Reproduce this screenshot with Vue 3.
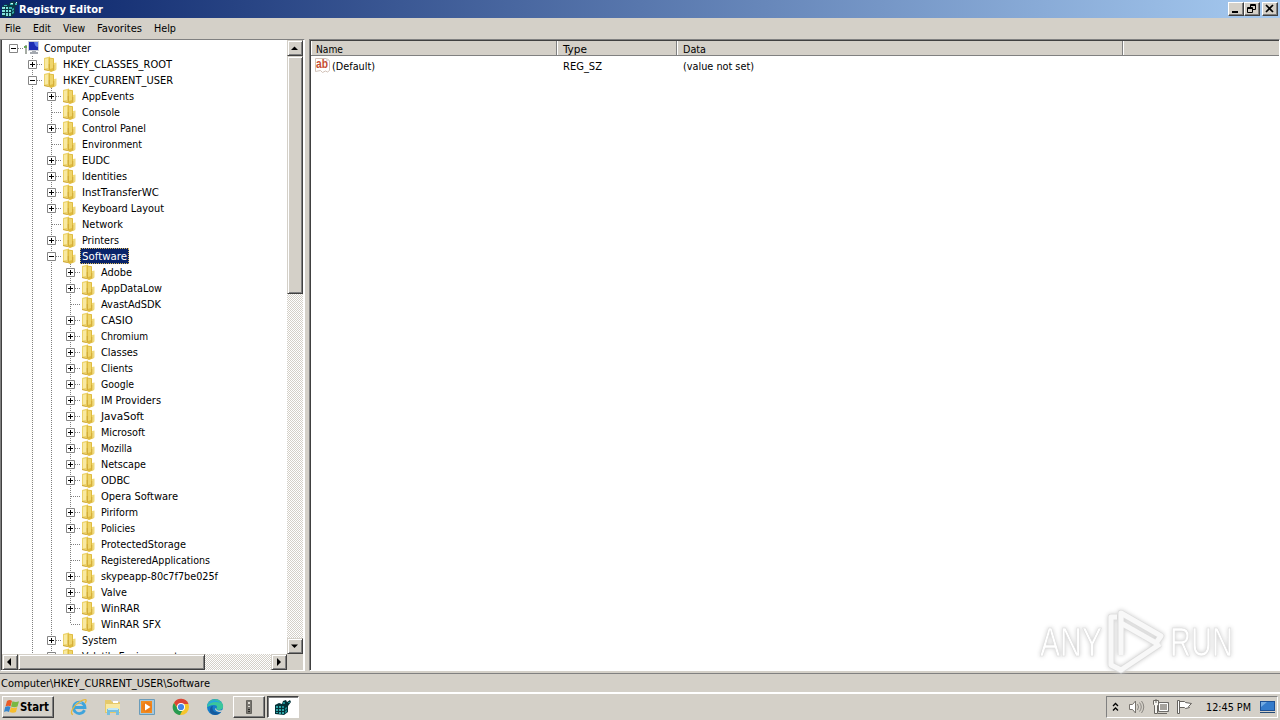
<script setup>
import { h } from 'vue'

const T = (p) =>
  h('svg', { class: 'label', width: p.w, height: 16, style: { overflow: 'visible', display: 'block', flex: 'none' } }, [
    h('text', { x: 0, y: 12, textLength: p.w, lengthAdjust: 'spacingAndGlyphs', fill: 'currentColor' }, p.t)
  ])
T.props = ['t', 'w']

const names = [
  [0, 'Computer', 47, '-'],
  [1, 'HKEY_CLASSES_ROOT', 109, '+'],
  [1, 'HKEY_CURRENT_USER', 110, '-'],
  [2, 'AppEvents', 52, '+'],
  [2, 'Console', 38, ''],
  [2, 'Control Panel', 64, '+'],
  [2, 'Environment', 60, ''],
  [2, 'EUDC', 28, '+'],
  [2, 'Identities', 45, '+'],
  [2, 'InstTransferWC', 77, '+'],
  [2, 'Keyboard Layout', 82, '+'],
  [2, 'Network', 41, ''],
  [2, 'Printers', 37, '+'],
  [2, 'Software', 45, '-'],
  [3, 'Adobe', 31, '+'],
  [3, 'AppDataLow', 61, '+'],
  [3, 'AvastAdSDK', 60, ''],
  [3, 'CASIO', 32, '+'],
  [3, 'Chromium', 47, '+'],
  [3, 'Classes', 37, '+'],
  [3, 'Clients', 32, '+'],
  [3, 'Google', 33, '+'],
  [3, 'IM Providers', 60, '+'],
  [3, 'JavaSoft', 43, '+'],
  [3, 'Microsoft', 44, '+'],
  [3, 'Mozilla', 31, '+'],
  [3, 'Netscape', 45, '+'],
  [3, 'ODBC', 29, '+'],
  [3, 'Opera Software', 77, ''],
  [3, 'Piriform', 37, '+'],
  [3, 'Policies', 34, '+'],
  [3, 'ProtectedStorage', 85, ''],
  [3, 'RegisteredApplications', 109, ''],
  [3, 'skypeapp-80c7f7be025f', 117, '+'],
  [3, 'Valve', 26, '+'],
  [3, 'WinRAR', 39, '+'],
  [3, 'WinRAR SFX', 60, ''],
  [2, 'System', 35, '+'],
  [2, 'Volatile Environment', 96, '+']
]
const rows = names.map(([level, name, w, box]) => ({
  level, name, w, box,
  last: name === 'WinRAR SFX',
  selected: name === 'Software'
}))
const menus = [['File', 16], ['Edit', 18], ['View', 22], ['Favorites', 45], ['Help', 22]]
</script>

<template>
  <div class="screen">
    <header class="title">
      <svg class="regicon" width="16" height="16" viewBox="0 0 16 16">
        <path fill="#0a3a46" d="M0 5l4-2 3 1 1-3 4-1 1 2 2-2 1 3-3 3v6l-4 5-9-1z"/>
        <path fill="#7fe0da" d="M0 6h3v2H0zM4 6h2v2H4zM0 9h3v2H0zM4 9h2v2H4zM7 9h2v2H7zM0 12h3v2H0zM4 12h2v3H4zM7 12h2v3H7z"/>
        <path fill="#36b0b0" d="M10 8l2-1v2l-2 1zM10 11l2-1v2l-2 1zM2 4h3v1H2zM8 2h3v2H8zM13 2h2v2h-2zM7 6h3v2H7z"/>
        <path fill="#d8f6f4" d="M9 2h2v1H9zM14 1h1v1h-1zM2 6h1v1H2z"/>
      </svg>
      <b><T t="Registry Editor" :w="84" /></b>
      <div class="winbtns">
        <i><svg width="14" height="12"><path d="M3 8h6v2H3z"/></svg></i>
        <i><svg width="14" height="12"><path fill="none" stroke="#000" d="M5.500 4V1.500h5v5H8M2.500 4.500h5v5h-5zM5 2.500h6M2 5.500h6"/></svg></i>
        <i class="close"><svg width="14" height="12"><path stroke="#000" stroke-width="1.700" d="M3 2l7 7M10 2L3 9"/></svg></i>
      </div>
    </header>
    <nav class="menu"><T v-for="m in menus" :key="m[0]" :t="m[0]" :w="m[1]" /></nav>

    <main class="panes">
      <section class="tree">
        <div class="treetop">
          <div class="rows">
            <div v-for="r in rows" :key="r.name" class="row">
              <span v-for="k in r.level" :key="k" class="cell"><svg v-if="k > 1" width="19" height="16"><path class="dots" d="M9.500 0V16"/></svg></span>
              <span class="cell"><svg width="19" height="16">
                <path v-if="r.level" class="dots" :d="r.last ? 'M9.500 0V8' : 'M9.500 0V16'"/>
                <path class="dots" d="M10 8.500H19"/>
                <template v-if="r.box"><path fill="#fff" stroke="#858585" d="M5.500 4.500h8v8h-8z"/><path stroke="#000" d="M7 8.500h5"/><path v-if="r.box === '+'" stroke="#000" d="M9.500 6v5"/></template>
              </svg></span>
              <svg v-if="r.level" class="icon" width="16" height="16">
                <path fill="#ecd36a" d="M1 2l6-1.500V15l-6-1z"/>
                <path fill="#f8e9a2" d="M2 3l3-.8V12l-3 .6z"/>
                <path fill="#dfbb3f" d="M6 1.500l5 .7V7l2 .5V14L8 16l-2-1z"/>
                <path fill="#efd56c" d="M7 2.500l3 .4V12l-3 1z"/>
                <path fill="#f0da7e" d="M11 7l2.500-.5v7L11 14.500z"/>
                <path fill="#cba336" d="M5.800 8h.8v6h-.8zM10.500 9h.7v5h-.7zM1 13l5 1.200v.8l-5-1z"/>
              </svg>
              <svg v-else class="icon" width="16" height="16">
                <path fill="#c9cdd6" d="M4 1h11v10H4z"/><path fill="#1b2bb4" d="M5 2h9v8H5z"/><path fill="#5c7ae6" d="M10 2h4v5c-2 0-3.500-2-4-5z"/><path fill="#a4a9b0" d="M8 11h4v1h2v2H6v-2h2z"/><path fill="#a6aca4" d="M1 5h2v9H1z"/><path fill="#68a558" d="M0 6h3v2H0z"/>
              </svg>
              <span class="name" :class="{ selected: r.selected }"><T :t="r.name" :w="r.w" /></span>
            </div>
          </div>
          <div class="vbar">
            <i class="sb"><svg width="12" height="12"><path d="M3 9h7L6.500 5.500z"/></svg></i>
            <i class="vthumb"></i>
            <span class="grow"></span>
            <i class="sb"><svg width="12" height="12"><path d="M3 5.500h7L6.500 9z"/></svg></i>
          </div>
        </div>
        <div class="hbar">
          <i class="sb"><svg width="12" height="12"><path d="M8 3v8L4 7z"/></svg></i>
          <i class="hthumb"></i>
          <span class="grow"></span>
          <i class="sb"><svg width="12" height="12"><path d="M5 3v8l4-4z"/></svg></i>
          <span class="corner"></span>
        </div>
      </section>

      <section class="list">
        <div class="heads">
          <span class="h1"><T t="Name" :w="27" /></span><span class="h2"><T t="Type" :w="24" /></span><span class="h3"><T t="Data" :w="23" /></span><span class="h4"></span>
        </div>
        <div class="values">
          <span class="v1">
            <svg width="16" height="16"><path fill="#fff" stroke="#d2c2b8" d="M.5 .5h11l3 2v10l-2 1.500-2-1-3 1.500-2-2-5 1z"/><path fill="#e4ded8" d="M11 0v3h4z"/><text x="1" y="9.500" class="ab" textLength="12" lengthAdjust="spacingAndGlyphs">ab</text></svg>
            <T t="(Default)" :w="43" />
          </span>
          <span class="v2"><T t="REG_SZ" :w="39" /></span>
          <span><T t="(value not set)" :w="71" /></span>
        </div>
        <svg class="mark" width="216" height="70" viewBox="0 0 216 70">
          <g class="word"><text x="3" y="48" textLength="62" lengthAdjust="spacingAndGlyphs">ANY</text><text x="133" y="48" textLength="63" lengthAdjust="spacingAndGlyphs">RUN</text></g>
          <g class="play edge"><path d="M80 9H74V57L84 62 123 36"/><path d="M84 47V5L124 28 119 35 84 15"/></g>
          <g class="play"><path d="M80 9H74V57L84 62 123 36"/><path d="M84 47V5L124 28 119 35 84 15"/></g>
        </svg>
      </section>
    </main>

    <div class="status"><T t="Computer\HKEY_CURRENT_USER\Software" :w="209" /></div>

    <footer class="task">
      <div class="start">
        <svg width="16" height="18" viewBox="0 0 16 18"><path fill="#e95b26" d="M3 3c2-1.500 4-1 5 0L6.500 8.500C5 7.500 3.500 7.500 1.500 8.500z"/><path fill="#79b843" d="M8.500 3.300c2 1 4.500 1 6.500 0L13.500 8.500c-2 1-4 1-6.500 0z"/><path fill="#3585cc" d="M1.200 9c2-1.200 4-1 5.300 0L5 14c-1.500-1-3.500-1-5 0z"/><path fill="#f7bd2d" d="M7 9.200c2 1 4.200 1 6.200 0L12 14c-2 1-4 1-6.500 0z"/></svg>
        <b><T t="Start" :w="29" /></b>
      </div>
      <div class="quick">
        <svg viewBox="0 0 18 18"><path fill="none" stroke="#3fa4dc" stroke-width="2.800" d="M14.500 12.200A5.700 5.700 0 1 1 15 9.500H5"/><path fill="none" stroke="#92cdec" d="M5 7a5 5 0 0 1 7-2"/><path fill="none" stroke="#e7b83c" stroke-width="1.300" d="M3 16.500C-1 16 3 8 10 3.500c5-3 8-2.500 5 1.500"/></svg>
        <svg viewBox="0 0 18 18"><path fill="#e5c96a" d="M1 2h6l1 2h8v11H1z"/><path fill="#f8e8a1" d="M2 6h14v8H2z"/><path fill="#fff" d="M9 3h5v2H9z"/><path fill="#75bfdf" d="M3 11h12v6h-3v-3H6v3H3z"/><path fill="#c3e7f4" d="M4 10h10v2H4z"/></svg>
        <svg viewBox="0 0 18 18"><path fill="#a6c7dc" stroke="#6a9cba" d="M1.500 1.500h15v15h-15z"/><path fill="#f18b20" d="M3 3h11v12H3z"/><circle cx="9" cy="9" r="5" fill="#ee7c16"/><path fill="#fff" d="M7 5.500v7L12.500 9z"/></svg>
        <svg viewBox="0 0 18 18"><circle cx="9" cy="9" r="8" fill="#f5c52c"/><path fill="#db4437" d="M2 5a8 8 0 0 1 14.500 1H9L6 10z"/><path fill="#279b51" d="M2 5l4.500 7L11 11l-3 6C1 16-1 9 2 5z"/><circle cx="9" cy="9" r="4" fill="#fff"/><circle cx="9" cy="9" r="3.100" fill="#4285e8"/></svg>
        <svg viewBox="0 0 18 18"><circle cx="9" cy="9" r="8" fill="#167dca"/><path fill="#3bc69b" d="M1 9C1 0 14-2 17 7c1 5-4 6-7 4 2-2 1-4-2-4-4 0-6 2-7 2z"/><path fill="#24a6df" d="M1 9c1-7 9-9 14-4C9 3 3 4 1 9z"/><path fill="#145a9e" d="M7 8c-2 4 2 8 8 6-4 5-12 3-11-2 0-2 1-4 3-4z"/><path fill="#d4d0c8" d="M10 11c2 2 5 2 8 0v2c-4 2-8 1-9-2 0-1 1-1 1 0z"/></svg>
      </div>
      <div class="tbtn"><svg width="16" height="16"><path fill="#77756f" stroke="#66645f" d="M5.500 1.500h5v13h-5z"/><path fill="#dedbd4" d="M7 3h2v2H7zM7 7h2v1H7z"/><path fill="#292826" d="M7 10h2v1H7zM7 12h2v1H7z"/></svg></div>
      <div class="tbtn active">
        <svg width="16" height="16" viewBox="0 0 16 16">
          <path fill="#043238" d="M0 6l4-2 3 1 1-3 3-1 1 2 3-2 1 2-3 4v6l-4 3-9-1z"/>
          <path fill="#2fa5a8" d="M1 7h2v2H1zM4 7h2v2H4zM1 10h2v2H1zM4 10h2v2H4zM7 10h2v2H7zM1 13h2v1H1zM4 13h2v2H4zM7 13h2v2H7z"/>
          <path fill="#1c8d92" d="M10 9l2-1v2l-2 1zM10 12l2-1v2l-2 1zM8 3h2v2H8zM13 3h2v1h-2zM7 7h2v2H7z"/>
        </svg>
      </div>
      <span class="grow"></span>
      <div class="tray">
        <svg class="chev" width="8" height="12"><path fill="none" stroke="#000" stroke-width="1.300" d="M1 5l2.500-2.500L6 5M1 9.500L3.500 7 6 9.500"/></svg>
        <svg class="sound" width="17" height="16"><path fill="#fff" stroke="#77736d" d="M1.500 5.500h3l3-3.500v12l-3-3.500h-3z"/><path fill="none" stroke="#898681" d="M9.500 5q2 3 0 6M11.500 3.500q3.500 4.500 0 9M13.500 2q4.500 6 0 12"/></svg>
        <svg class="net" width="17" height="17"><path fill="#a6a39e" stroke="#6d6b68" d="M5.500 3.500h10v9h-10z"/><path fill="none" stroke="#fff" d="M6.500 4.500h8v7h-8z"/><path fill="#f7f6f2" stroke="#696661" d="M.5 1.500h5v4l-1 1v8h-3v-8l-1-1z"/><path stroke="#696661" d="M3 0v4M5 14.500h9"/></svg>
        <svg class="flag" width="17" height="17"><path fill="#fff" stroke="#65625e" d="M1.500 1.500h2v13h-2zM3.500 2.500h5l1 1 6 1-3 3 1 1-4 1-1-1h-5z"/></svg>
        <T t="12:45 PM" :w="45" />
        <svg class="desk" width="16" height="16"><path fill="#1c4f94" d="M0 2h15v10H0z"/><path fill="#347bcb" d="M1 3h13v8H1z"/><path fill="#74abe2" d="M1 3h6L1 8z"/><path fill="#244a76" d="M0 13h15v1H0z"/></svg>
      </div>
    </footer>
  </div>
</template>

<style>
body { margin: 0; overflow: hidden; }
.label text { white-space: pre; }
</style>
<style scoped>
.screen { width: 1280px; height: 720px; background: #d4d0c8; font-family: "DejaVu Sans Condensed", "DejaVu Sans", sans-serif; font-stretch: condensed; font-size: 11px; color: #000; display: flex; flex-direction: column; overflow: hidden; }
svg { display: block; flex: none; }
i { font-style: normal; box-sizing: border-box; flex: none; }
.grow { flex: 1; }
.title { height: 18px; display: flex; align-items: center; background: linear-gradient(90deg, #0a246a, #a6caf0); color: #fff; padding-left: 2px; }
.title b { margin-left: 1px; }
.winbtns { margin-left: auto; display: flex; padding-right: 2px; }
.winbtns i { width: 16px; height: 14px; background: #d4d0c8; border: 1px solid; border-color: #fff #404040 #404040 #fff; box-shadow: inset -1px -1px #808080; }
.winbtns .close { margin-left: 2px; }
.menu { height: 21px; display: flex; gap: 12px; padding-left: 5px; align-items: center; box-sizing: border-box; padding-bottom: 1px; }
.panes { height: 632px; display: flex; justify-content: space-between; }
.tree { width: 305px; box-sizing: border-box; border: 1px solid; border-color: #808080 #fff #fff #808080; box-shadow: inset 1px 0 #404040; background: #fff; padding: 0 1px 0 1px; display: flex; flex-direction: column; }
.treetop { height: 614px; display: flex; }
.rows { width: 285px; overflow: hidden; }
.row { height: 16px; display: flex; padding-left: 2px; }
.cell { width: 19px; height: 16px; flex: none; }
.icon { margin-left: 1px; }
.dots { stroke: #808080; stroke-dasharray: 1 1; fill: none; }
.name { margin-left: 2px; padding: 0 2px 0 2.400px; height: 16px; }
.selected { background: #0a246a; color: #fff; outline: 1px dotted #d9b95e; outline-offset: -1px; }
.vbar, .hbar { background: repeating-conic-gradient(#d4d0c8 0 25%, #fff 0 50%) 0 0 / 2px 2px; display: flex; }
.vbar { width: 16px; flex-direction: column; }
.hbar { height: 16px; }
.sb, .vthumb, .hthumb { background: #d4d0c8; border: 1px solid; border-color: #d4d0c8 #404040 #404040 #d4d0c8; box-shadow: inset 1px 1px #fff, inset -1px -1px #808080; }
.sb { width: 16px; height: 16px; }
.vthumb { height: 238px; }
.hthumb { width: 187px; }
.corner { width: 16px; background: #d4d0c8; }
.list { width: 971px; box-sizing: border-box; border: 1px solid; border-color: #808080 #fff #fff #808080; box-shadow: inset 1px 1px #404040; background: #fff; padding: 1px 0 0 1px; position: relative; }
.heads { height: 15px; display: flex; background: #d4d0c8; border-bottom: 1px solid #808080; box-sizing: border-box; }
.heads span { box-sizing: border-box; border-right: 1px solid #808080; border-left: 1px solid #fff; height: 14px; padding-left: 5px; }
.heads .h1 { width: 246px; padding-left: 4px; } .h2 { width: 120px; } .h3 { width: 446px; } .heads .h4 { flex: 1; border-right: 0; }
.values { display: flex; padding-top: 2px; height: 16px; }
.v1 { width: 252px; display: flex; box-sizing: border-box; padding-left: 4px; gap: 1px; }
.v2 { width: 120px; }
.ab { font: bold 12px "Liberation Sans", sans-serif; fill: #c64d32; }
.mark { position: absolute; left: 727px; top: 568px; filter: drop-shadow(0 0 2px #ccc); }
.word { font: 41px "Liberation Sans", sans-serif; fill: #fff; stroke: #dcdcdc; stroke-width: .7; }
.play { fill: none; stroke: #f8f8f8; stroke-width: 5; stroke-linejoin: round; }
.edge { stroke: #dedede; stroke-width: 6.500; }
.status { height: 20px; box-sizing: border-box; margin-top: 2px; border-top: 1px solid #808080; border-bottom: 1px solid #fff; padding: 1px 0 0 1px; }
.task { height: 27px; box-sizing: border-box; border-top: 1px solid #fff; display: flex; padding: 2px 2px 0; }
.start, .tbtn { height: 22px; box-sizing: border-box; border: 1px solid; border-color: #fff #404040 #404040 #fff; box-shadow: inset -1px -1px #808080; display: flex; align-items: center; }
.start { width: 52px; padding-left: 1px; }
.start b { margin-left: 0; }
.start b, .start .label { font-size: 12px; }
.quick { display: flex; gap: 16px; padding-left: 16px; width: 163px; align-items: center; height: 22px; }
.quick svg { width: 18px; height: 18px; }
.tbtn { width: 32px; justify-content: center; margin-right: 2px; }
.active { background: #fff; border-color: #404040 #fff #fff #404040; box-shadow: inset 1px 1px #808080; }
.tray { width: 172px; height: 22px; border: 1px solid; border-color: #808080 #fff #fff #808080; box-sizing: border-box; display: flex; align-items: center; padding-left: 5px; }
.sound { margin-left: 8px; } .net { margin-left: 8px; } .flag { margin: 0 13px 0 6px; } .desk { margin-left: 9px; }
</style>
